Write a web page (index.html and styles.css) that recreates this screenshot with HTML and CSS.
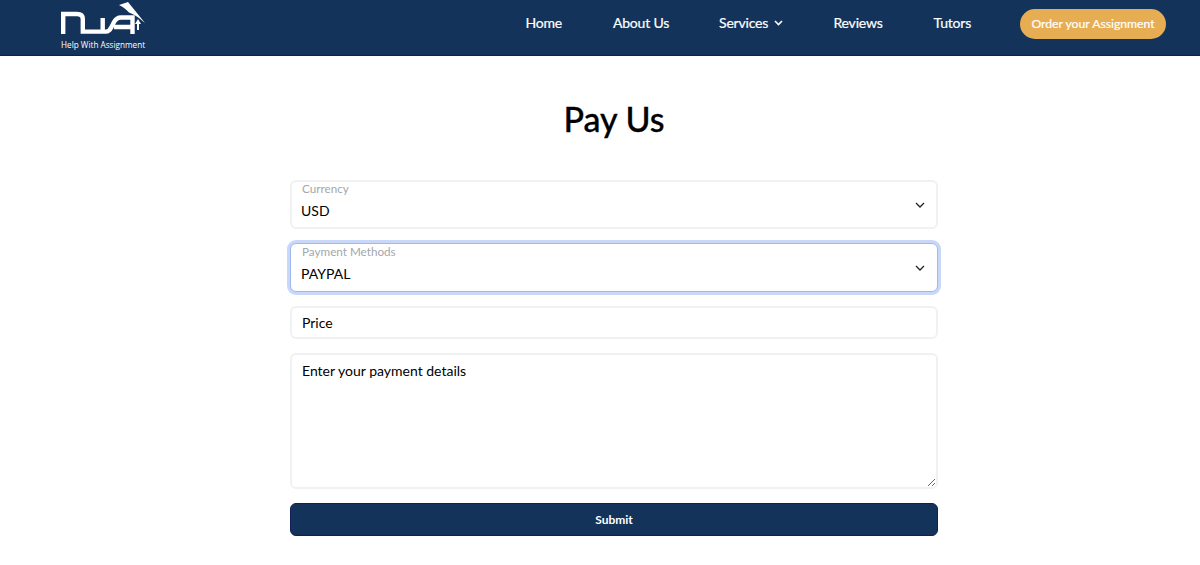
FILE: index.html

```html
<!DOCTYPE html>
<html lang="en">
<head>
    <meta charset="UTF-8">
    <meta name="viewport" content="width=device-width, initial-scale=1.0">
    <title>Pay Us</title>
    <link rel="stylesheet" href="styles.css">
</head>
<body>

    <header class="site-header">
        <a class="logo" href="#">
            <svg class="logo-mark" width="86" height="38" viewBox="0 0 86 38">
                <path d="M2.2 32 V12 H16 C20 12 21.8 14 21.8 17 V29.6 H41.7 V16 M41.7 29.6 H45 C48 29.6 49 28 50.5 25 L53 20 C55 16.5 57 15.5 60 15.5 H71.5 V32 M53 25 H71.5" fill="none" stroke="#fff" stroke-width="4.4"/>
                <path d="M58 3 L67 0 L84 21 L78 16 C75 14 72 12 68 10.5 C65 7 62 5 58 3 Z" fill="#fff"/>
                <path d="M77 17 L80 22 H78 V28 H76 V22 H74 Z" fill="#fff"/>
            </svg>
            <span class="logo-text">Help With Assignment</span>
        </a>
        <nav class="main-nav">
            <a class="nav-link nav-home" href="#">Home</a>
            <a class="nav-link nav-about" href="#">About Us</a>
            <a class="nav-link nav-services" href="#">Services
                <svg width="9" height="6" viewBox="0 0 9 6"><path d="M1 1 L4.5 4.5 L8 1" fill="none" stroke="#fff" stroke-width="1.6"/></svg>
            </a>
            <a class="nav-link nav-reviews" href="#">Reviews</a>
            <a class="nav-link nav-tutors" href="#">Tutors</a>
            <a class="order-btn" href="#">Order your Assignment</a>
        </nav>
    </header>

    <main class="content">
        <h1>Pay Us</h1>

        <form class="pay-form">
            <div class="float-field">
                <label for="currency">Currency</label>
                <select id="currency">
                    <option>USD</option>
                    <option>EUR</option>
                    <option>GBP</option>
                </select>
            </div>

            <div class="float-field focused">
                <label for="method">Payment Methods</label>
                <select id="method">
                    <option>PAYPAL</option>
                    <option>BANK</option>
                </select>
            </div>

            <input class="text-field" type="text" placeholder="Price">

            <textarea class="text-field details" placeholder="Enter your payment details"></textarea>

            <button class="submit-btn" type="button">Submit</button>
        </form>
    </main>

</body>
</html>
```

FILE: styles.css

```css
body {
    font-family: "Lato", "Noto Sans", sans-serif;
    background-color: #fff;
    color: #000;
    margin: 0;
    padding: 0;
}

.site-header {
    height: 55px;
    background-color: #14335a;
    border-bottom: 1px solid #0e1f55;
    display: flex;
    justify-content: space-between;
    padding: 0 34px 0 61px;
}

.logo {
    display: flex;
    flex-direction: column;
    color: white;
    text-decoration: none;
    padding-top: 2px;
}

.logo-mark {
    display: block;
}

.logo-text {
    font-family: "Open Sans", sans-serif;
    font-size: 8.2px;
    font-weight: 500;
    line-height: 9px;
    white-space: nowrap;
}

.main-nav {
    display: flex;
    align-items: center;
    height: 48px;
}

.nav-link {
    color: white;
    font-size: 14px;
    letter-spacing: -0.2px;
    text-decoration: none;
    white-space: nowrap;
    padding-bottom: 4px;
    -webkit-text-stroke: 0.2px white;
}

.nav-services svg {
    margin-left: 3px;
    vertical-align: 2px;
}

.nav-home { margin-right: 51px; }
.nav-about { margin-right: 50px; }
.nav-services { margin-right: 50px; }
.nav-reviews { margin-right: 51px; }
.nav-tutors { margin-right: 49px; }

.order-btn {
    width: 146px;
    height: 30px;
    line-height: 30px;
    color: white;
    text-align: center;
    text-decoration: none;
    white-space: nowrap;
    background-color: #e7ad52;
    border-radius: 15px;
    font-size: 12.2px;
    -webkit-text-stroke: 0.2px white;
}

.content {
    width: 648px;
    margin-left: 290px;
}

h1 {
    margin: 0;
    padding-top: 43px;
    height: 81px;
    font-size: 34px;
    font-weight: 500;
    line-height: 40px;
    text-align: center;
    -webkit-text-stroke: 0.3px black;
}

.pay-form {
    display: flex;
    flex-direction: column;
    gap: 14px;
}

.float-field {
    position: relative;
}

.float-field label {
    position: absolute;
    top: 1px;
    left: 12px;
    font-size: 11.7px;
    line-height: 15px;
    color: #a3a7ab;
}

.float-field select {
    display: block;
    width: 100%;
    height: 49px;
    padding: 12px 30px 0 9px;
    font-family: inherit;
    font-size: 14px;
    color: #000;
    background-color: white;
    border: 2px solid #f0f1f3;
    border-radius: 6px;
    box-sizing: border-box;
    appearance: none;
    background-image: url("data:image/svg+xml,%3Csvg xmlns='http://www.w3.org/2000/svg' width='10' height='6' viewBox='0 0 10 6'%3E%3Cpath d='M1 1l4 4 4-4' fill='none' stroke='%23222' stroke-width='1.3'/%3E%3C/svg%3E");
    background-repeat: no-repeat;
    background-position: right 11px center;
    outline: none;
}

.float-field.focused select {
    padding-left: 10px;
    border: 1px solid #9db9f2;
    box-shadow: 0 0 0 3px #c9d8f9;
    background-position: right 12px center;
}

.text-field {
    display: block;
    width: 100%;
    height: 33px;
    padding: 0 10px;
    font-family: inherit;
    font-size: 14px;
    color: #000;
    background-color: white;
    border: 2px solid #f0f1f3;
    border-radius: 6px;
    box-sizing: border-box;
    outline: none;
}

.text-field::placeholder {
    color: #000;
    opacity: 1;
}

.details {
    height: 136px;
    padding-top: 7px;
    resize: vertical;
}

.submit-btn {
    display: block;
    width: 100%;
    height: 33px;
    font-family: inherit;
    font-size: 12px;
    font-weight: 700;
    color: white;
    background-color: #14335a;
    border: 1px solid #0e1f55;
    border-radius: 6px;
    cursor: pointer;
}
```
